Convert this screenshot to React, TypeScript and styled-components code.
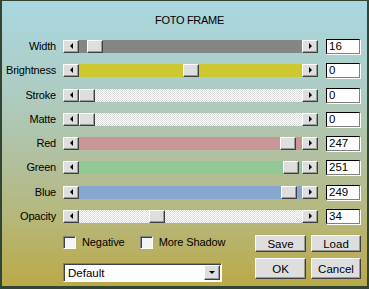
import React from 'react';
import styled, { createGlobalStyle } from 'styled-components';

const GlobalStyle = createGlobalStyle`
    body {
        margin: 0;
        font-family: "Liberation Sans", Arial, sans-serif;
    }
`;

type Slider = {
    label: string;
    value: number;
    min: number;
    max: number;
    track: string;
};

const checker = 'repeating-conic-gradient(#ffffff 0 25%, #dadada 0 50%) 0 0 / 2px 2px';

const sliders: Slider[] = [
    { label: 'Width', value: 16, min: 0, max: 400, track: '#858585' },
    { label: 'Brightness', value: 0, min: -255, max: 255, track: '#cdc82f' },
    { label: 'Stroke', value: 0, min: 0, max: 100, track: checker },
    { label: 'Matte', value: 0, min: 0, max: 100, track: checker },
    { label: 'Red', value: 247, min: 0, max: 255, track: '#c99696' },
    { label: 'Green', value: 251, min: 0, max: 255, track: '#93c896' },
    { label: 'Blue', value: 249, min: 0, max: 255, track: '#86a8d0' },
    { label: 'Opacity', value: 34, min: 0, max: 100, track: checker },
];

const THUMB = 16;

const Arrow = ({ dir }: { dir: 'left' | 'right' | 'down' }) => {
    const pts = dir === 'left' ? '4,0 4,6 1,3' : dir === 'right' ? '1,0 1,6 4,3' : '0,1 6,1 3,4';
    const w = dir === 'down' ? 7 : 5;
    const h = dir === 'down' ? 5 : 7;
    return (
        <svg width={w} height={h} viewBox={`0 0 ${w} ${h}`}>
            <polygon points={pts} fill="#000" />
        </svg>
    );
};

const FotoFrame = () => {
    return (
        <Frame>
            <Title>FOTO FRAME</Title>
            <Rows>
                {sliders.map((s) => {
                    const frac = (s.value - s.min) / (s.max - s.min);
                    return (
                        <Row key={s.label}>
                            <Label>{s.label}</Label>
                            <ScrollBar>
                                <ArrowBtn><Arrow dir="left" /></ArrowBtn>
                                <Track bg={s.track}>
                                    <Thumb style={{ left: `calc(${frac} * (100% - ${THUMB}px))` }} />
                                </Track>
                                <ArrowBtn><Arrow dir="right" /></ArrowBtn>
                            </ScrollBar>
                            <ValueBox>{s.value}</ValueBox>
                        </Row>
                    );
                })}
            </Rows>
            <Bottom>
                <LeftCol>
                    <Checks>
                        <CheckItem>
                            <CheckBox />
                            <span>Negative</span>
                        </CheckItem>
                        <CheckItem>
                            <CheckBox />
                            <span>More Shadow</span>
                        </CheckItem>
                    </Checks>
                    <Select>
                        <span>Default</span>
                        <SelectBtn><Arrow dir="down" /></SelectBtn>
                    </Select>
                </LeftCol>
                <Buttons>
                    <Button h={17}>Save</Button>
                    <Button h={17}>Load</Button>
                    <Button h={21}>OK</Button>
                    <Button h={21}>Cancel</Button>
                </Buttons>
            </Bottom>
        </Frame>
    );
};

const App = () => (
    <>
        <GlobalStyle />
        <FotoFrame />
    </>
);

const Frame = styled.div`
    width: 369px;
    height: 289px;
    box-sizing: border-box;
    border: 2px solid #324532;
    border-top-width: 1px;
    border-bottom-width: 3px;
    background: linear-gradient(180deg, #a9d7e0 0%, #adcdc4 30%, #b2c0a0 55%, #b6b676 78%, #bba948 100%);
    padding-top: 13px;
    font-size: 11px;
    color: #000;
`;

const Title = styled.div`
    text-align: center;
    line-height: 13px;
    letter-spacing: -0.3px;
    padding-left: 10px;
`;

const Rows = styled.div`
    display: flex;
    flex-direction: column;
    gap: 9.3px;
    margin-top: 12px;
`;

const Row = styled.div`
    display: grid;
    grid-template-columns: 54px 255px 35px;
    column-gap: 7px;
    align-items: center;
    height: 15px;
    & > :last-child {
        margin-left: 1px;
    }
`;

const Label = styled.div`
    text-align: right;
    letter-spacing: -0.2px;
    line-height: 13px;
`;

const ScrollBar = styled.div`
    display: flex;
    height: 13px;
`;

const Bevel = styled.div`
    box-sizing: border-box;
    background: #dedede;
    border: 1px solid;
    border-color: #ffffff #404040 #404040 #ffffff;
    box-shadow: inset -1px -1px 0 #9a9a9a;
`;

const ArrowBtn = styled(Bevel)`
    width: 16px;
    height: 13px;
    display: flex;
    align-items: center;
    justify-content: center;
    flex-shrink: 0;
`;

const Track = styled.div<{ bg: string }>`
    position: relative;
    flex: 1;
    background: ${({ bg }) => bg};
`;

const Thumb = styled(Bevel)`
    position: absolute;
    top: 0;
    width: ${THUMB}px;
    height: 13px;
`;

const ValueBox = styled.div`
    box-sizing: border-box;
    height: 15px;
    background: #fff;
    border: 1px solid;
    border-color: #000 #808080 #808080 #000;
    box-shadow: 1px 1px 0 #ffffff;
    padding-left: 2px;
    line-height: 13px;
    font-size: 11.5px;
`;

const Bottom = styled.div`
    display: flex;
    gap: 33px;
    margin: 11px 0 0 61px;
`;

const LeftCol = styled.div`
    width: 159px;
    display: flex;
    flex-direction: column;
    gap: 14px;
`;

const Checks = styled.div`
    display: flex;
    gap: 15px;
    height: 13px;
    margin-top: 1px;
    align-items: center;
    white-space: nowrap;
`;

const CheckItem = styled.label`
    display: flex;
    align-items: center;
    gap: 6px;
    line-height: 13px;
    letter-spacing: -0.1px;
    white-space: nowrap;
    flex-shrink: 0;
`;

const CheckBox = styled.span`
    box-sizing: border-box;
    width: 13px;
    height: 13px;
    flex-shrink: 0;
    background: #f4f4f4;
    border: 1px solid;
    border-color: #808080 #ffffff #ffffff #808080;
    box-shadow: inset 1px 1px 0 #404040;
`;

const Select = styled.div`
    box-sizing: border-box;
    height: 19px;
    background: #fff;
    border: 1px solid;
    border-color: #808080 #ffffff #ffffff #808080;
    box-shadow: inset 1px 1px 0 #404040;
    display: flex;
    align-items: center;
    justify-content: space-between;
    padding: 0 1px 0 4px;
    font-size: 11.5px;
`;

const SelectBtn = styled(Bevel)`
    width: 16px;
    height: 15px;
    display: flex;
    align-items: center;
    justify-content: center;
`;

const Buttons = styled.div`
    display: grid;
    grid-template-columns: 51px 50px;
    column-gap: 5px;
    row-gap: 6px;
    align-content: start;
`;

const Button = styled(Bevel)<{ h: number }>`
    height: ${({ h }) => h}px;
    display: flex;
    align-items: center;
    justify-content: center;
    font-size: 11.5px;
`;

export default App;
